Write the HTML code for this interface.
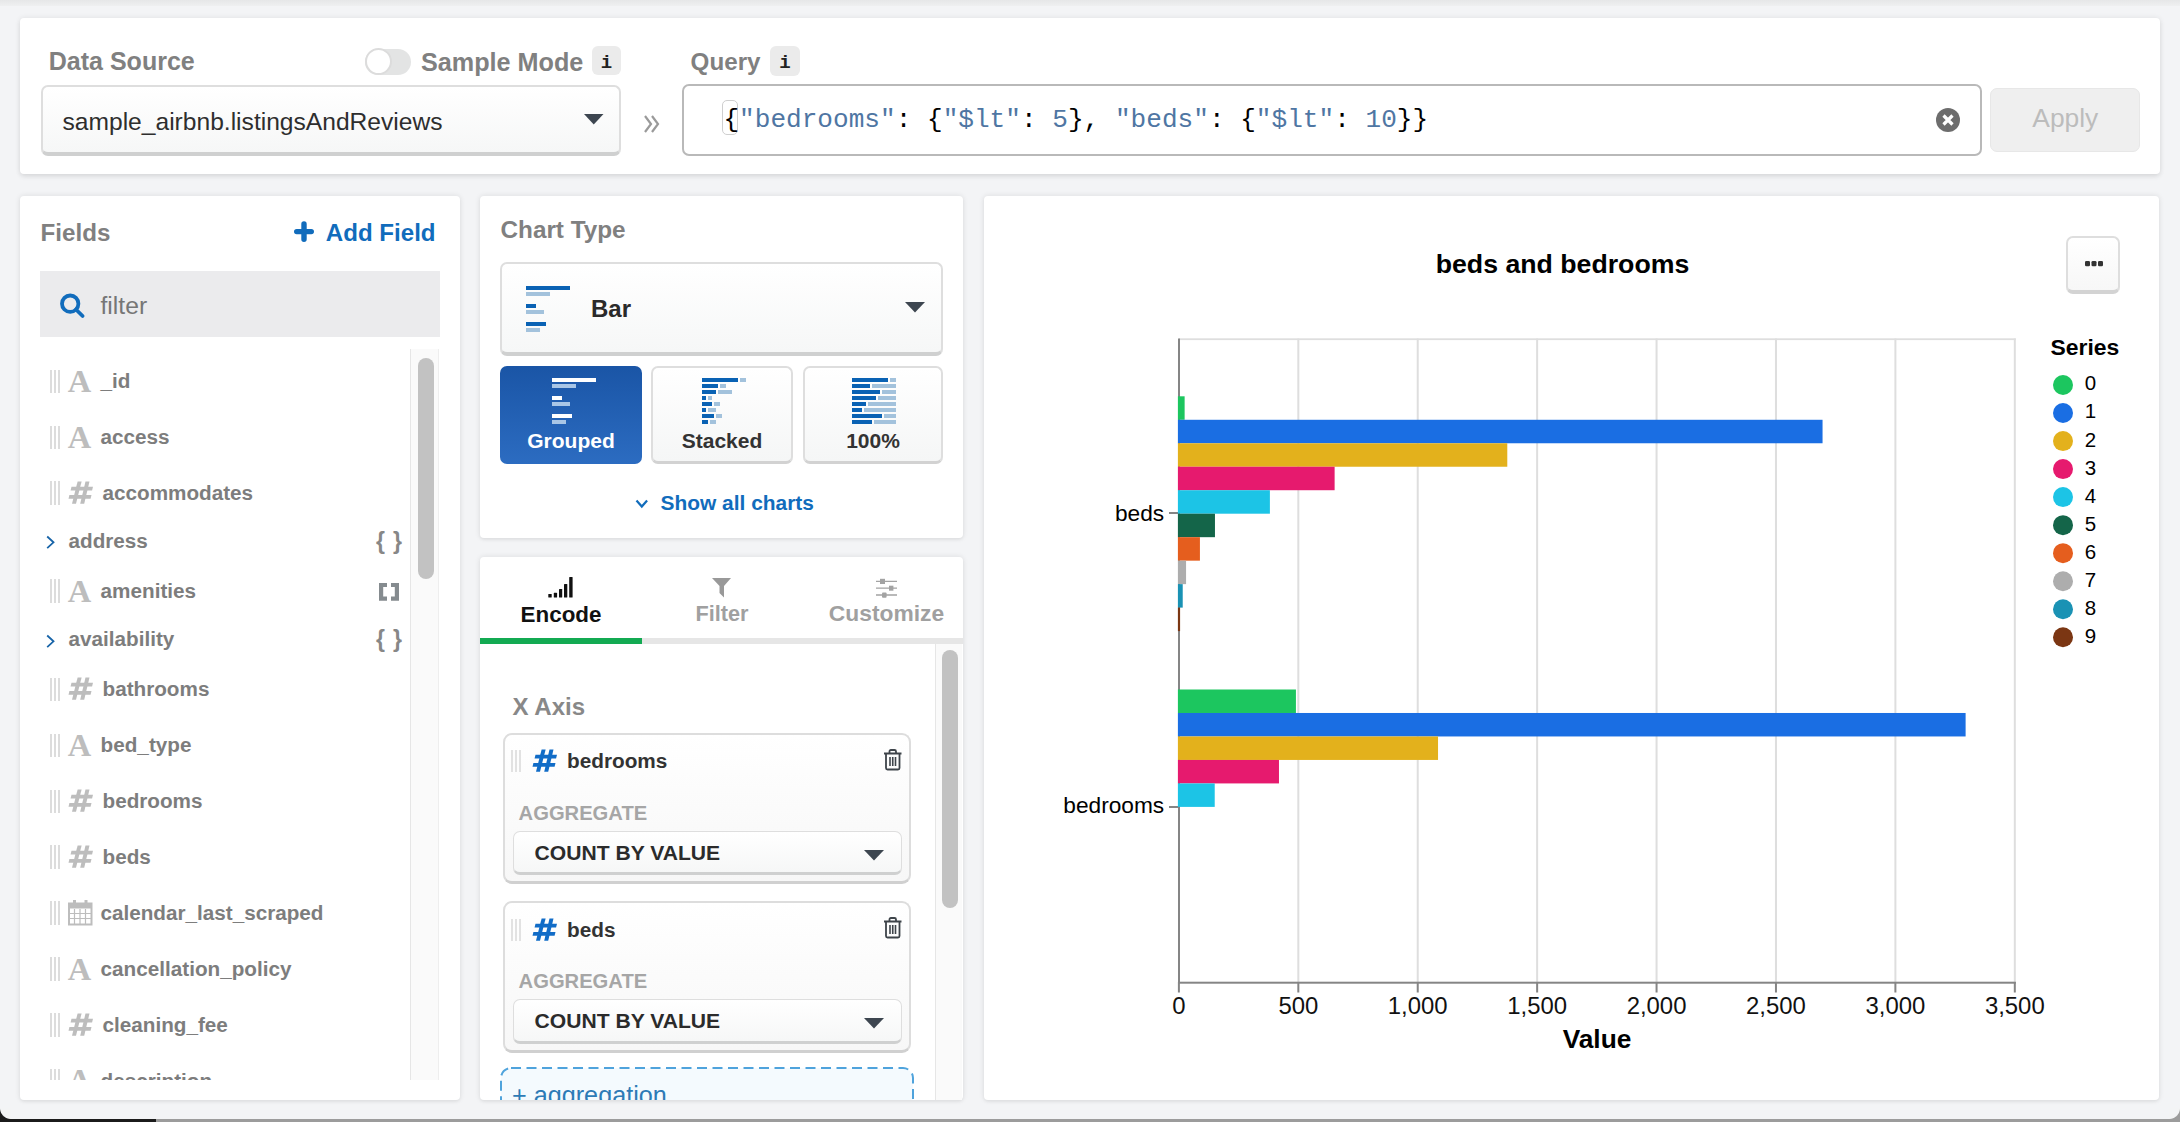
<!DOCTYPE html>
<html><head><meta charset="utf-8"><title>Chart Builder</title>
<style>
html,body{margin:0;padding:0;}
body{width:2180px;height:1122px;overflow:hidden;position:relative;background:#f3f4f6;font-family:"Liberation Sans", sans-serif;}
.t{position:absolute;white-space:nowrap;}
.b{position:absolute;box-sizing:border-box;}
.panel{background:#fff;border-radius:4px;box-shadow:0 0 5px 1px rgba(0,0,0,0.075),0 2px 3px rgba(0,0,0,0.04);}
.sel{background:linear-gradient(#ffffff,#f6f7f7);border:2px solid #dedede;border-bottom:4px solid #cfd0d0;border-radius:7px;}
.ibox{background:#ebebeb;border-radius:6px;}
.grip{border-left:2px solid #dcdcdc;border-right:2px solid #dcdcdc;}
.grip:after{content:"";position:absolute;left:2px;top:0;width:2px;height:100%;background:#dcdcdc;}
svg{position:absolute;overflow:visible;}
</style></head><body>

<div class="b " style="left:0px;top:0px;width:2180px;height:6px;background:linear-gradient(#e6e7e8,#eff0f1);"></div>
<div class="b panel" style="left:20px;top:18px;width:2140px;height:156px;box-shadow:0 0 5px 1px rgba(0,0,0,0.06),0 3px 5px rgba(0,0,0,0.07);"></div>
<div class="t " style="left:48.80px;top:48.17px;font-size:25px;line-height:27.93px;color:#808080;font-weight:700;">Data Source</div>
<div class="b " style="left:365px;top:49px;width:46px;height:26px;background:#e3e4e4;border-radius:13px;"></div>
<div class="b " style="left:365px;top:48px;width:27px;height:27px;background:#fff;border:2px solid #dcdcdc;border-radius:50%;"></div>
<div class="t " style="left:421.00px;top:47.79px;font-size:25.2px;line-height:28.15px;color:#808080;font-weight:700;">Sample Mode</div>
<div class="b ibox" style="left:592px;top:46px;width:29px;height:29px;"></div>
<div class="t " style="left:-393.50px;width:2000px;text-align:center;top:52.67px;font-size:19px;line-height:21.53px;color:#222;font-weight:700;font-family:'Liberation Mono', monospace;">i</div>
<div class="b sel" style="left:41px;top:85px;width:580px;height:71px;"></div>
<div class="t " style="left:62.50px;top:107.54px;font-size:24.6px;line-height:27.48px;color:#2e2e2e;">sample_airbnb.listingsAndReviews</div>
<svg style="left:584px;top:114px" width="20" height="11"><path d="M0 0H19.5L9.75 10.5Z" fill="#3d4650"/></svg>
<svg style="left:643px;top:114px" width="20" height="20"><path d="M2 2L8 10L2 18M9 2L15 10L9 18" stroke="#9a9a9a" stroke-width="2.2" fill="none"/></svg>
<div class="t " style="left:690.60px;top:48.30px;font-size:24.2px;line-height:27.03px;color:#808080;font-weight:700;">Query</div>
<div class="b ibox" style="left:770px;top:46px;width:30px;height:30px;"></div>
<div class="t " style="left:-215.00px;width:2000px;text-align:center;top:52.67px;font-size:19px;line-height:21.53px;color:#222;font-weight:700;font-family:'Liberation Mono', monospace;">i</div>
<div class="b " style="left:682px;top:84px;width:1300px;height:72px;background:#fff;border:2px solid #b9b9b9;border-radius:7px;"></div>
<div class="b " style="left:722px;top:100px;width:16px;height:35px;border:1.5px solid #cfcfcf;border-radius:5px;"></div>
<div class="t " style="left:723.40px;top:105.76px;font-size:26.1px;line-height:29.57px;color:#000;font-family:'Liberation Mono', monospace;"><span style="color:#000">{</span><span style="color:#4f76a3">"bedrooms"</span><span style="color:#000">: {</span><span style="color:#4f76a3">"$lt"</span><span style="color:#000">: </span><span style="color:#4f76a3">5</span><span style="color:#000">}, </span><span style="color:#4f76a3">"beds"</span><span style="color:#000">: {</span><span style="color:#4f76a3">"$lt"</span><span style="color:#000">: </span><span style="color:#4f76a3">10</span><span style="color:#000">}}</span></div>
<svg style="left:1936px;top:108px" width="24" height="24"><circle cx="12" cy="12" r="12" fill="#6d6d6d"/><path d="M7.5 7.5L16.5 16.5M16.5 7.5L7.5 16.5" stroke="#fff" stroke-width="3.2"/></svg>
<div class="b " style="left:1990px;top:88px;width:150px;height:64px;background:#efefef;border:1px solid #e7e7e7;border-radius:7px;"></div>
<div class="t " style="left:1065.30px;width:2000px;text-align:center;top:103.91px;font-size:26.4px;line-height:29.49px;color:#bcbcbc;">Apply</div>
<div class="b panel" style="left:20px;top:196px;width:440px;height:904px;"></div>
<div class="t " style="left:40.60px;top:219.44px;font-size:24.15px;line-height:26.98px;color:#808080;font-weight:700;">Fields</div>
<svg style="left:290px;top:218px" width="28" height="28"><path d="M14 6V21.2M6.7 13.6H21.3" stroke="#116cbc" stroke-width="5.4" stroke-linecap="round"/></svg>
<div class="t " style="left:325.80px;top:219.89px;font-size:24.1px;line-height:26.92px;color:#116cbc;font-weight:700;">Add Field</div>
<div class="b " style="left:40px;top:271px;width:400px;height:66px;background:#ebebed;"></div>
<svg style="left:60px;top:293px" width="26" height="26"><circle cx="10.2" cy="10.7" r="8.2" stroke="#116cbc" stroke-width="3.8" fill="none"/><path d="M16 16.5L22.6 23" stroke="#116cbc" stroke-width="3.8" stroke-linecap="round"/></svg>
<div class="t " style="left:100.50px;top:292.05px;font-size:24.7px;line-height:27.59px;color:#767676;">filter</div>
<div class="b" style="left:20px;top:349px;width:440px;height:731px;overflow:hidden;">
<div class="b grip" style="left:30px;top:20.5px;width:10px;height:23.5px;"></div>
<div class="t " style="left:47.80px;top:13.84px;font-size:32.5px;line-height:35.98px;color:#bdbdbd;font-weight:700;font-family:'Liberation Serif', serif;">A</div>
<div class="t " style="left:80.60px;top:20.27px;font-size:20.7px;line-height:23.12px;color:#7d7d7d;font-weight:700;">_id</div>
<div class="b grip" style="left:30px;top:76.5px;width:10px;height:23.5px;"></div>
<div class="t " style="left:47.80px;top:69.84px;font-size:32.5px;line-height:35.98px;color:#bdbdbd;font-weight:700;font-family:'Liberation Serif', serif;">A</div>
<div class="t " style="left:80.60px;top:76.27px;font-size:20.7px;line-height:23.12px;color:#7d7d7d;font-weight:700;">access</div>
<div class="b grip" style="left:30px;top:132.0px;width:10px;height:23.5px;"></div>
<svg style="left:41.10px;top:124.50px" width="40" height="36"><polygon points="16.6,7.5 20.6,7.5 15,29.8 11,29.8" fill="#bdbdbd"/><polygon points="24.5,7.5 28.5,7.5 23.2,29.8 19.2,29.8" fill="#bdbdbd"/><polygon points="10.5,12.7 32,12.7 31.1,16.5 9.6,16.5" fill="#bdbdbd"/><polygon points="8.4,20.9 30.5,20.9 29.6,24.7 7.5,24.7" fill="#bdbdbd"/></svg>
<div class="t " style="left:82.50px;top:131.77px;font-size:20.7px;line-height:23.12px;color:#7d7d7d;font-weight:700;">accommodates</div>
<svg style="left:26px;top:186.3px" width="10" height="15"><path d="M1.2 1.5L7.5 7.3L1.2 13.1" stroke="#1764a8" stroke-width="1.8" fill="none"/></svg>
<div class="t " style="left:48.50px;top:179.87px;font-size:20.7px;line-height:23.12px;color:#7d7d7d;font-weight:700;">address</div>
<div class="b grip" style="left:30px;top:230.20000000000005px;width:10px;height:23.5px;"></div>
<div class="t " style="left:47.80px;top:223.54px;font-size:32.5px;line-height:35.98px;color:#bdbdbd;font-weight:700;font-family:'Liberation Serif', serif;">A</div>
<div class="t " style="left:80.60px;top:229.97px;font-size:20.7px;line-height:23.12px;color:#7d7d7d;font-weight:700;">amenities</div>
<svg style="left:26px;top:284.5px" width="10" height="15"><path d="M1.2 1.5L7.5 7.3L1.2 13.1" stroke="#1764a8" stroke-width="1.8" fill="none"/></svg>
<div class="t " style="left:48.50px;top:278.07px;font-size:20.7px;line-height:23.12px;color:#7d7d7d;font-weight:700;">availability</div>
<div class="b grip" style="left:30px;top:328.5px;width:10px;height:23.5px;"></div>
<svg style="left:41.10px;top:321.00px" width="40" height="36"><polygon points="16.6,7.5 20.6,7.5 15,29.8 11,29.8" fill="#bdbdbd"/><polygon points="24.5,7.5 28.5,7.5 23.2,29.8 19.2,29.8" fill="#bdbdbd"/><polygon points="10.5,12.7 32,12.7 31.1,16.5 9.6,16.5" fill="#bdbdbd"/><polygon points="8.4,20.9 30.5,20.9 29.6,24.7 7.5,24.7" fill="#bdbdbd"/></svg>
<div class="t " style="left:82.50px;top:328.27px;font-size:20.7px;line-height:23.12px;color:#7d7d7d;font-weight:700;">bathrooms</div>
<div class="b grip" style="left:30px;top:384.70000000000005px;width:10px;height:23.5px;"></div>
<div class="t " style="left:47.80px;top:378.04px;font-size:32.5px;line-height:35.98px;color:#bdbdbd;font-weight:700;font-family:'Liberation Serif', serif;">A</div>
<div class="t " style="left:80.60px;top:384.47px;font-size:20.7px;line-height:23.12px;color:#7d7d7d;font-weight:700;">bed_type</div>
<div class="b grip" style="left:30px;top:440.5px;width:10px;height:23.5px;"></div>
<svg style="left:41.10px;top:433.00px" width="40" height="36"><polygon points="16.6,7.5 20.6,7.5 15,29.8 11,29.8" fill="#bdbdbd"/><polygon points="24.5,7.5 28.5,7.5 23.2,29.8 19.2,29.8" fill="#bdbdbd"/><polygon points="10.5,12.7 32,12.7 31.1,16.5 9.6,16.5" fill="#bdbdbd"/><polygon points="8.4,20.9 30.5,20.9 29.6,24.7 7.5,24.7" fill="#bdbdbd"/></svg>
<div class="t " style="left:82.50px;top:440.27px;font-size:20.7px;line-height:23.12px;color:#7d7d7d;font-weight:700;">bedrooms</div>
<div class="b grip" style="left:30px;top:496.4px;width:10px;height:23.5px;"></div>
<svg style="left:41.10px;top:488.90px" width="40" height="36"><polygon points="16.6,7.5 20.6,7.5 15,29.8 11,29.8" fill="#bdbdbd"/><polygon points="24.5,7.5 28.5,7.5 23.2,29.8 19.2,29.8" fill="#bdbdbd"/><polygon points="10.5,12.7 32,12.7 31.1,16.5 9.6,16.5" fill="#bdbdbd"/><polygon points="8.4,20.9 30.5,20.9 29.6,24.7 7.5,24.7" fill="#bdbdbd"/></svg>
<div class="t " style="left:82.50px;top:496.17px;font-size:20.7px;line-height:23.12px;color:#7d7d7d;font-weight:700;">beds</div>
<div class="b grip" style="left:30px;top:552.3px;width:10px;height:23.5px;"></div>
<svg style="left:48px;top:550.8px" width="25" height="26"><rect x="1" y="3.5" width="22.5" height="21" fill="none" stroke="#bdbdbd" stroke-width="2"/><rect x="1" y="3.5" width="22.5" height="5" fill="#bdbdbd"/><rect x="5" y="0" width="3" height="6" fill="#bdbdbd"/><rect x="16.5" y="0" width="3" height="6" fill="#bdbdbd"/><path d="M6.5 9V24M12 9V24M17.5 9V24M1 13.5H23.5M1 18.5H23.5" stroke="#bdbdbd" stroke-width="1.2"/></svg>
<div class="t " style="left:80.40px;top:552.07px;font-size:20.7px;line-height:23.12px;color:#7d7d7d;font-weight:700;">calendar_last_scraped</div>
<div class="b grip" style="left:30px;top:608.2px;width:10px;height:23.5px;"></div>
<div class="t " style="left:47.80px;top:601.54px;font-size:32.5px;line-height:35.98px;color:#bdbdbd;font-weight:700;font-family:'Liberation Serif', serif;">A</div>
<div class="t " style="left:80.60px;top:607.97px;font-size:20.7px;line-height:23.12px;color:#7d7d7d;font-weight:700;">cancellation_policy</div>
<div class="b grip" style="left:30px;top:664.0px;width:10px;height:23.5px;"></div>
<svg style="left:41.10px;top:656.50px" width="40" height="36"><polygon points="16.6,7.5 20.6,7.5 15,29.8 11,29.8" fill="#bdbdbd"/><polygon points="24.5,7.5 28.5,7.5 23.2,29.8 19.2,29.8" fill="#bdbdbd"/><polygon points="10.5,12.7 32,12.7 31.1,16.5 9.6,16.5" fill="#bdbdbd"/><polygon points="8.4,20.9 30.5,20.9 29.6,24.7 7.5,24.7" fill="#bdbdbd"/></svg>
<div class="t " style="left:82.50px;top:663.77px;font-size:20.7px;line-height:23.12px;color:#7d7d7d;font-weight:700;">cleaning_fee</div>
<div class="b grip" style="left:30px;top:720.0px;width:10px;height:23.5px;"></div>
<div class="t " style="left:47.80px;top:713.34px;font-size:32.5px;line-height:35.98px;color:#bdbdbd;font-weight:700;font-family:'Liberation Serif', serif;">A</div>
<div class="t " style="left:80.60px;top:719.77px;font-size:20.7px;line-height:23.12px;color:#7d7d7d;font-weight:700;">description</div>
<div class="t " style="left:-639.50px;width:2000px;text-align:center;top:179.79px;font-size:23px;line-height:25.69px;color:#878787;font-weight:700;">{</div>
<div class="t " style="left:-622.50px;width:2000px;text-align:center;top:179.79px;font-size:23px;line-height:25.69px;color:#878787;font-weight:700;">}</div>
<div class="t " style="left:-639.50px;width:2000px;text-align:center;top:277.89px;font-size:23px;line-height:25.69px;color:#878787;font-weight:700;">{</div>
<div class="t " style="left:-622.50px;width:2000px;text-align:center;top:277.89px;font-size:23px;line-height:25.69px;color:#878787;font-weight:700;">}</div>
<svg style="left:359px;top:234px" width="21" height="18"><path d="M8 2H2.1V15.7H8M12 2H17.9V15.7H12" stroke="#858b8f" stroke-width="4.2" fill="none"/></svg>
<div class="b " style="left:390px;top:0px;width:29px;height:731px;border-left:1px solid #e6e6e6;border-right:1px solid #eeeeee;background:#fafafa;"></div>
<div class="b " style="left:398px;top:8.600000000000023px;width:16px;height:221.79999999999995px;background:#c2c2c2;border-radius:8px;"></div>
</div>
<div class="b panel" style="left:480px;top:196px;width:483px;height:342px;"></div>
<div class="t " style="left:500.50px;top:215.81px;font-size:24.3px;line-height:27.14px;color:#808080;font-weight:700;">Chart Type</div>
<div class="b sel" style="left:500px;top:262px;width:443px;height:94px;"></div>
<svg style="left:526px;top:286px" width="46" height="48"><rect x="0" y="0" width="44" height="4" fill="#0a62b4"/><rect x="0" y="6" width="24" height="4" fill="#a3c2dc"/><rect x="0" y="18" width="10" height="4" fill="#0a62b4"/><rect x="0" y="24" width="18" height="4" fill="#a3c2dc"/><rect x="0" y="36" width="20" height="4" fill="#0a62b4"/><rect x="0" y="42" width="14" height="4" fill="#a3c2dc"/></svg>
<div class="t " style="left:591.00px;top:295.88px;font-size:24px;line-height:26.81px;color:#2a2a2a;font-weight:700;">Bar</div>
<svg style="left:905px;top:301.5px" width="21" height="11"><path d="M0 0H20L10 10.5Z" fill="#3d4650"/></svg>
<div class="b " style="left:500px;top:366px;width:142px;height:98px;background:linear-gradient(#1a55a6,#2c6cc1);border-radius:7px;"></div>
<div class="b " style="left:651px;top:366px;width:142px;height:98px;background:linear-gradient(#ffffff,#f5f6f6);border:2px solid #dedede;border-bottom:3px solid #d2d2d2;border-radius:7px;"></div>
<div class="b " style="left:803px;top:366px;width:140px;height:98px;background:linear-gradient(#ffffff,#f5f6f6);border:2px solid #dedede;border-bottom:3px solid #d2d2d2;border-radius:7px;"></div>
<svg style="left:552px;top:378px" width="46" height="48"><rect x="0" y="0" width="44" height="4" fill="#fff"/><rect x="0" y="6" width="24" height="4" fill="#a9c6e6"/><rect x="0" y="18" width="10" height="4" fill="#fff"/><rect x="0" y="24" width="18" height="4" fill="#a9c6e6"/><rect x="0" y="36" width="20" height="4" fill="#fff"/><rect x="0" y="42" width="14" height="4" fill="#a9c6e6"/></svg>
<svg style="left:702px;top:378px" width="46" height="48"><rect x="0" y="0" width="36" height="4" fill="#0a62b4"/><rect x="38" y="0" width="6" height="4" fill="#a3c2dc"/><rect x="0" y="6" width="16" height="4" fill="#0a62b4"/><rect x="18" y="6" width="6" height="4" fill="#a3c2dc"/><rect x="0" y="12" width="14" height="4" fill="#0a62b4"/><rect x="16" y="12" width="14" height="4" fill="#a3c2dc"/><rect x="0" y="18" width="4" height="4" fill="#0a62b4"/><rect x="6" y="18" width="4" height="4" fill="#a3c2dc"/><rect x="0" y="24" width="10" height="4" fill="#0a62b4"/><rect x="12" y="24" width="6" height="4" fill="#a3c2dc"/><rect x="0" y="30" width="4" height="4" fill="#0a62b4"/><rect x="6" y="30" width="8" height="4" fill="#a3c2dc"/><rect x="0" y="36" width="12" height="4" fill="#0a62b4"/><rect x="14" y="36" width="6" height="4" fill="#a3c2dc"/><rect x="0" y="42" width="6" height="4" fill="#0a62b4"/><rect x="8" y="42" width="6" height="4" fill="#a3c2dc"/></svg>
<svg style="left:852px;top:378px" width="46" height="48"><rect x="0" y="0" width="36" height="4" fill="#0a62b4"/><rect x="38" y="0" width="6" height="4" fill="#a3c2dc"/><rect x="0" y="6" width="18" height="4" fill="#0a62b4"/><rect x="20" y="6" width="24" height="4" fill="#a3c2dc"/><rect x="0" y="12" width="28" height="4" fill="#0a62b4"/><rect x="30" y="12" width="14" height="4" fill="#a3c2dc"/><rect x="0" y="18" width="24" height="4" fill="#0a62b4"/><rect x="26" y="18" width="18" height="4" fill="#a3c2dc"/><rect x="0" y="24" width="14" height="4" fill="#0a62b4"/><rect x="16" y="24" width="28" height="4" fill="#a3c2dc"/><rect x="0" y="30" width="10" height="4" fill="#0a62b4"/><rect x="12" y="30" width="32" height="4" fill="#a3c2dc"/><rect x="0" y="36" width="30" height="4" fill="#0a62b4"/><rect x="32" y="36" width="12" height="4" fill="#a3c2dc"/><rect x="0" y="42" width="20" height="4" fill="#0a62b4"/><rect x="22" y="42" width="22" height="4" fill="#a3c2dc"/></svg>
<div class="t " style="left:-429.00px;width:2000px;text-align:center;top:429.00px;font-size:21px;line-height:23.46px;color:#fff;font-weight:700;">Grouped</div>
<div class="t " style="left:-278.00px;width:2000px;text-align:center;top:429.00px;font-size:21px;line-height:23.46px;color:#333;font-weight:700;">Stacked</div>
<div class="t " style="left:-127.00px;width:2000px;text-align:center;top:429.00px;font-size:21px;line-height:23.46px;color:#333;font-weight:700;">100%</div>
<svg style="left:635px;top:499px" width="14" height="10"><path d="M1.5 1.5L6.8 7.5L12.1 1.5" stroke="#116cbc" stroke-width="2.2" fill="none"/></svg>
<div class="t " style="left:660.60px;top:491.09px;font-size:20.9px;line-height:23.35px;color:#116cbc;font-weight:700;">Show all charts</div>
<div class="b panel" style="left:480px;top:557px;width:483px;height:543px;"></div>
<svg style="left:548px;top:577px" width="26" height="22"><rect x="0.3" y="17" width="3.4" height="3.5" rx="0.6" fill="#111"/><rect x="5.8" y="15.8" width="3.3" height="4.7" rx="0.6" fill="#111"/><rect x="11" y="12" width="3.2" height="8.5" rx="0.6" fill="#111"/><rect x="16" y="7" width="3.3" height="13.5" rx="0.6" fill="#111"/><rect x="21.2" y="0" width="3.4" height="20.5" rx="0.6" fill="#111"/></svg>
<div class="t " style="left:-439.00px;width:2000px;text-align:center;top:601.73px;font-size:22.4px;line-height:25.02px;color:#111;font-weight:700;">Encode</div>
<svg style="left:712px;top:578px" width="20" height="20"><path d="M0 0H19L12 8V19.5L7.5 15V8Z" fill="#999"/></svg>
<div class="t " style="left:-278.00px;width:2000px;text-align:center;top:602.36px;font-size:21.7px;line-height:24.24px;color:#a0a0a0;font-weight:700;">Filter</div>
<svg style="left:876px;top:578px" width="22" height="22"><path d="M0 3.4H21M0 10.2H21M0 17H21" stroke="#a3a3a3" stroke-width="1.3"/><rect x="4" y="0.8" width="5" height="5.2" fill="#a3a3a3"/><rect x="13" y="7.7" width="4.4" height="5" fill="#a3a3a3"/><rect x="6" y="14.4" width="4.6" height="5.3" rx="1" fill="#a3a3a3"/></svg>
<div class="t " style="left:-113.50px;width:2000px;text-align:center;top:601.37px;font-size:22.8px;line-height:25.47px;color:#a0a0a0;font-weight:700;">Customize</div>
<div class="b " style="left:480px;top:638px;width:483px;height:6px;background:#e6e6e6;"></div>
<div class="b " style="left:480px;top:638px;width:162px;height:6px;background:#13aa52;"></div>
<div class="b" style="left:480px;top:644px;width:483px;height:456px;overflow:hidden;">
<div class="t " style="left:32.50px;top:50.22px;font-size:24.07px;line-height:26.89px;color:#888;font-weight:700;">X Axis</div>
<div class="b " style="left:22.5px;top:88.5px;width:408.5px;height:151.5px;background:linear-gradient(#ffffff,#f7f7f7);border:2px solid #dddddd;border-bottom:3px solid #d0d0d0;border-radius:9px;"></div>
<div class="b grip" style="left:31px;top:106.0px;width:10px;height:22.0px;opacity:0.8;"></div>
<svg style="left:45.00px;top:98.00px" width="40" height="36"><polygon points="16.6,7.5 20.6,7.5 15,29.8 11,29.8" fill="#116cc7"/><polygon points="24.5,7.5 28.5,7.5 23.2,29.8 19.2,29.8" fill="#116cc7"/><polygon points="10.5,12.7 32,12.7 31.1,16.5 9.6,16.5" fill="#116cc7"/><polygon points="8.4,20.9 30.5,20.9 29.6,24.7 7.5,24.7" fill="#116cc7"/></svg>
<div class="t " style="left:87.00px;top:105.02px;font-size:20.75px;line-height:23.18px;color:#333;font-weight:700;">bedrooms</div>
<svg style="left:403px;top:104.5px" width="20" height="22"><path d="M1 4.5H18.5M6.5 4.5V2.5Q6.5 1 8 1H11.5Q13 1 13 2.5V4.5" stroke="#3e444a" stroke-width="1.8" fill="none"/><path d="M3 4.5V19Q3 20.5 4.5 20.5H15Q16.5 20.5 16.5 19V4.5" stroke="#3e444a" stroke-width="1.8" fill="none"/><path d="M7 8V17M9.75 8V17M12.5 8V17" stroke="#3e444a" stroke-width="1.6"/></svg>
<div class="t " style="left:38.60px;top:157.52px;font-size:20.2px;line-height:22.56px;color:#a6a6a6;font-weight:700;">AGGREGATE</div>
<div class="b sel" style="left:33px;top:186.70000000000005px;width:389px;height:44.799999999999955px;border-width:1.5px;border-bottom-width:3.5px;"></div>
<div class="t " style="left:54.60px;top:196.90px;font-size:21.1px;line-height:23.57px;color:#2b2b2b;font-weight:700;">COUNT BY VALUE</div>
<svg style="left:384px;top:205.7px" width="21" height="11"><path d="M0 0H20L10 10.5Z" fill="#3d4650"/></svg>
<div class="b " style="left:22.5px;top:257px;width:408.5px;height:151.5px;background:linear-gradient(#ffffff,#f7f7f7);border:2px solid #dddddd;border-bottom:3px solid #d0d0d0;border-radius:9px;"></div>
<div class="b grip" style="left:31px;top:274.5px;width:10px;height:22.0px;opacity:0.8;"></div>
<svg style="left:45.00px;top:266.50px" width="40" height="36"><polygon points="16.6,7.5 20.6,7.5 15,29.8 11,29.8" fill="#116cc7"/><polygon points="24.5,7.5 28.5,7.5 23.2,29.8 19.2,29.8" fill="#116cc7"/><polygon points="10.5,12.7 32,12.7 31.1,16.5 9.6,16.5" fill="#116cc7"/><polygon points="8.4,20.9 30.5,20.9 29.6,24.7 7.5,24.7" fill="#116cc7"/></svg>
<div class="t " style="left:87.00px;top:273.52px;font-size:20.75px;line-height:23.18px;color:#333;font-weight:700;">beds</div>
<svg style="left:403px;top:273.0px" width="20" height="22"><path d="M1 4.5H18.5M6.5 4.5V2.5Q6.5 1 8 1H11.5Q13 1 13 2.5V4.5" stroke="#3e444a" stroke-width="1.8" fill="none"/><path d="M3 4.5V19Q3 20.5 4.5 20.5H15Q16.5 20.5 16.5 19V4.5" stroke="#3e444a" stroke-width="1.8" fill="none"/><path d="M7 8V17M9.75 8V17M12.5 8V17" stroke="#3e444a" stroke-width="1.6"/></svg>
<div class="t " style="left:38.60px;top:326.02px;font-size:20.2px;line-height:22.56px;color:#a6a6a6;font-weight:700;">AGGREGATE</div>
<div class="b sel" style="left:33px;top:355.20000000000005px;width:389px;height:44.799999999999955px;border-width:1.5px;border-bottom-width:3.5px;"></div>
<div class="t " style="left:54.60px;top:365.40px;font-size:21.1px;line-height:23.57px;color:#2b2b2b;font-weight:700;">COUNT BY VALUE</div>
<svg style="left:384px;top:374.2px" width="21" height="11"><path d="M0 0H20L10 10.5Z" fill="#3d4650"/></svg>
<svg style="left:20px;top:423px" width="414" height="80"><rect x="1" y="1" width="412" height="76" rx="10" fill="#f4fafe" stroke="#4fa3dc" stroke-width="2" stroke-dasharray="10 5.5"/></svg>
<div class="t " style="left:32.00px;top:437.19px;font-size:25.2px;line-height:28.15px;color:#2d7bb6;">+ aggregation</div>
<div class="b " style="left:454.5px;top:0px;width:27.5px;height:456px;border-left:1px solid #e6e6e6;background:#fafafa;"></div>
<div class="b " style="left:462px;top:6px;width:16px;height:257.5px;background:#c2c2c2;border-radius:8px;"></div>
</div>
<div class="b panel" style="left:984px;top:196px;width:1175px;height:904px;"></div>
<div class="t " style="left:562.50px;width:2000px;text-align:center;top:249.64px;font-size:26.7px;line-height:29.82px;color:#000;font-weight:700;">beds and bedrooms</div>
<div class="b " style="left:2066px;top:236px;width:54px;height:58px;background:linear-gradient(#ffffff,#f7f7f7);border:2px solid #dedede;border-bottom:4px solid #d3d3d3;border-radius:7px;"></div>
<svg style="left:2085px;top:260.5px" width="19" height="6"><rect x="0" y="0" width="5" height="5.2" rx="1.3" fill="#333"/><rect x="6.5" y="0" width="5" height="5.2" rx="1.3" fill="#333"/><rect x="13" y="0" width="5" height="5.2" rx="1.3" fill="#333"/></svg>
<svg style="left:0px;top:0px" width="2180" height="1122"><rect x="1297.32" y="338.5" width="2" height="644" fill="#dedede"/><rect x="1416.73" y="338.5" width="2" height="644" fill="#dedede"/><rect x="1536.14" y="338.5" width="2" height="644" fill="#dedede"/><rect x="1655.56" y="338.5" width="2" height="644" fill="#dedede"/><rect x="1774.97" y="338.5" width="2" height="644" fill="#dedede"/><rect x="1894.39" y="338.5" width="2" height="644" fill="#dedede"/><rect x="2013.81" y="338.5" width="2" height="644" fill="#dedede"/><rect x="1178.90" y="338.3" width="836.90" height="1.8" fill="#dedede"/><rect x="1178" y="338.5" width="2" height="645" fill="#858585"/><rect x="1178" y="981.7" width="837.81" height="2" fill="#858585"/><rect x="1177.90" y="982" width="2" height="10.5" fill="#858585"/><rect x="1297.32" y="982" width="2" height="10.5" fill="#858585"/><rect x="1416.73" y="982" width="2" height="10.5" fill="#858585"/><rect x="1536.14" y="982" width="2" height="10.5" fill="#858585"/><rect x="1655.56" y="982" width="2" height="10.5" fill="#858585"/><rect x="1774.97" y="982" width="2" height="10.5" fill="#858585"/><rect x="1894.39" y="982" width="2" height="10.5" fill="#858585"/><rect x="2013.81" y="982" width="2" height="10.5" fill="#858585"/><rect x="1169" y="512" width="9.5" height="2" fill="#858585"/><rect x="1169" y="806" width="9.5" height="2" fill="#858585"/><rect x="1177.90" y="396.30" width="6.73" height="23.48" fill="#1cc65f"/><rect x="1177.90" y="419.78" width="644.65" height="23.48" fill="#1a6ee3"/><rect x="1177.90" y="443.26" width="329.39" height="23.48" fill="#e3b11c"/><rect x="1177.90" y="466.74" width="156.72" height="23.48" fill="#e61a6e"/><rect x="1177.90" y="490.22" width="91.99" height="23.48" fill="#1cc4e6"/><rect x="1177.90" y="513.70" width="37.06" height="23.48" fill="#146549"/><rect x="1177.90" y="537.18" width="22.02" height="23.48" fill="#e55e1e"/><rect x="1177.90" y="560.66" width="8.16" height="23.48" fill="#adadad"/><rect x="1177.90" y="584.14" width="4.82" height="23.48" fill="#1a92b4"/><rect x="1177.90" y="607.62" width="2.19" height="23.48" fill="#7b3613"/><rect x="1177.90" y="689.50" width="118.03" height="23.48" fill="#1cc65f"/><rect x="1177.90" y="712.98" width="787.71" height="23.48" fill="#1a6ee3"/><rect x="1177.90" y="736.46" width="260.13" height="23.48" fill="#e3b11c"/><rect x="1177.90" y="759.94" width="101.07" height="23.48" fill="#e61a6e"/><rect x="1177.90" y="783.42" width="36.82" height="23.48" fill="#1cc4e6"/><circle cx="2063" cy="385.00" r="10" fill="#1cc65f"/><circle cx="2063" cy="413.03" r="10" fill="#1a6ee3"/><circle cx="2063" cy="441.06" r="10" fill="#e3b11c"/><circle cx="2063" cy="469.09" r="10" fill="#e61a6e"/><circle cx="2063" cy="497.12" r="10" fill="#1cc4e6"/><circle cx="2063" cy="525.15" r="10" fill="#146549"/><circle cx="2063" cy="553.18" r="10" fill="#e55e1e"/><circle cx="2063" cy="581.21" r="10" fill="#adadad"/><circle cx="2063" cy="609.24" r="10" fill="#1a92b4"/><circle cx="2063" cy="637.27" r="10" fill="#7b3613"/></svg>
<div class="t " style="left:178.90px;width:2000px;text-align:center;top:993.07px;font-size:23.9px;line-height:26.70px;color:#111;">0</div>
<div class="t " style="left:298.32px;width:2000px;text-align:center;top:993.07px;font-size:23.9px;line-height:26.70px;color:#111;">500</div>
<div class="t " style="left:417.73px;width:2000px;text-align:center;top:993.07px;font-size:23.9px;line-height:26.70px;color:#111;">1,000</div>
<div class="t " style="left:537.14px;width:2000px;text-align:center;top:993.07px;font-size:23.9px;line-height:26.70px;color:#111;">1,500</div>
<div class="t " style="left:656.56px;width:2000px;text-align:center;top:993.07px;font-size:23.9px;line-height:26.70px;color:#111;">2,000</div>
<div class="t " style="left:775.97px;width:2000px;text-align:center;top:993.07px;font-size:23.9px;line-height:26.70px;color:#111;">2,500</div>
<div class="t " style="left:895.39px;width:2000px;text-align:center;top:993.07px;font-size:23.9px;line-height:26.70px;color:#111;">3,000</div>
<div class="t " style="left:1014.81px;width:2000px;text-align:center;top:993.07px;font-size:23.9px;line-height:26.70px;color:#111;">3,500</div>
<div class="t " style="left:597.00px;width:2000px;text-align:center;top:1025.00px;font-size:26.3px;line-height:29.38px;color:#000;font-weight:700;">Value</div>
<div class="t " style="left:-835.80px;width:2000px;text-align:right;top:501.06px;font-size:22.7px;line-height:25.36px;color:#000;">beds</div>
<div class="t " style="left:-835.80px;width:2000px;text-align:right;top:792.76px;font-size:22.7px;line-height:25.36px;color:#000;">bedrooms</div>
<div class="t " style="left:2050.60px;top:335.08px;font-size:22.9px;line-height:25.58px;color:#000;font-weight:700;">Series</div>
<div class="t " style="left:2084.80px;top:372.45px;font-size:20.5px;line-height:22.90px;color:#000;">0</div>
<div class="t " style="left:2084.80px;top:400.48px;font-size:20.5px;line-height:22.90px;color:#000;">1</div>
<div class="t " style="left:2084.80px;top:428.51px;font-size:20.5px;line-height:22.90px;color:#000;">2</div>
<div class="t " style="left:2084.80px;top:456.54px;font-size:20.5px;line-height:22.90px;color:#000;">3</div>
<div class="t " style="left:2084.80px;top:484.57px;font-size:20.5px;line-height:22.90px;color:#000;">4</div>
<div class="t " style="left:2084.80px;top:512.60px;font-size:20.5px;line-height:22.90px;color:#000;">5</div>
<div class="t " style="left:2084.80px;top:540.63px;font-size:20.5px;line-height:22.90px;color:#000;">6</div>
<div class="t " style="left:2084.80px;top:568.66px;font-size:20.5px;line-height:22.90px;color:#000;">7</div>
<div class="t " style="left:2084.80px;top:596.69px;font-size:20.5px;line-height:22.90px;color:#000;">8</div>
<div class="t " style="left:2084.80px;top:624.72px;font-size:20.5px;line-height:22.90px;color:#000;">9</div>
<div class="b " style="left:0px;top:1119px;width:2180px;height:3px;background:#9c9c9c;"></div>
<div class="b " style="left:0px;top:1119px;width:156px;height:3px;background:#1b1b1b;"></div>
<div class="b " style="left:0px;top:1108px;width:11px;height:11px;background:radial-gradient(circle at 100% 0%, #f3f4f5 10.5px, #1b1b1b 11.5px);"></div>
<div class="b " style="left:2169px;top:1108px;width:11px;height:11px;background:radial-gradient(circle at 0% 0%, #f3f4f5 10.5px, #9c9c9c 11.5px);"></div>
</body></html>
